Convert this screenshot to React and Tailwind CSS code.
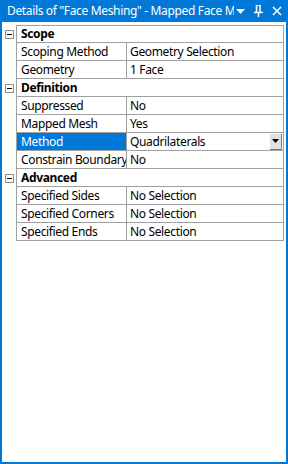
import React from "react";

const groups = [
  {
    title: "Scope",
    rows: [
      { label: "Scoping Method", value: "Geometry Selection" },
      { label: "Geometry", value: "1 Face" },
    ],
  },
  {
    title: "Definition",
    rows: [
      { label: "Suppressed", value: "No" },
      { label: "Mapped Mesh", value: "Yes" },
      { label: "Method", value: "Quadrilaterals", selected: true },
      { label: "Constrain Boundary", value: "No" },
    ],
  },
  {
    title: "Advanced",
    rows: [
      { label: "Specified Sides", value: "No Selection" },
      { label: "Specified Corners", value: "No Selection" },
      { label: "Specified Ends", value: "No Selection" },
    ],
  },
];

function MinusBox() {
  return (
    <div className="w-[9px] h-[9px] border border-[#919191] bg-white flex items-center justify-center">
      <div className="w-[5px] h-px bg-black" />
    </div>
  );
}

function GroupRow({ title, first }) {
  return (
    <div className="flex h-[18px]">
      <div className="w-[11px] flex items-center">
        <MinusBox />
      </div>
      <div
        className={`flex-1 flex items-center pl-[4px] font-bold border-x border-b border-[#a0a0a0] ${
          first ? "border-t" : ""
        }`}
      >
        {title}
      </div>
    </div>
  );
}

function PropRow({ label, value, selected }) {
  return (
    <div className="flex h-[18px]">
      <div className="w-[11px]" />
      <div className="flex-1 flex border-x border-b border-[#a0a0a0]">
        <div
          className={`w-[110px] flex items-center pl-[4px] border-r border-[#a0a0a0] whitespace-nowrap overflow-hidden ${
            selected ? "bg-[#0078d7] text-white" : ""
          }`}
        >
          {label}
        </div>
        <div className="flex-1 flex items-center pl-[3px] justify-between whitespace-nowrap">
          <span>{value}</span>
          {selected && (
            <div className="w-[12px] h-[16px] bg-[#e1e1e1] border-r border-b border-[#7a7a7a] flex items-center justify-center mr-[1px]">
              <svg width="7" height="4" viewBox="0 0 7 4">
                <path d="M0 0h7L3.5 4z" fill="#000" />
              </svg>
            </div>
          )}
        </div>
      </div>
    </div>
  );
}

export default function App() {
  return (
    <div
      className="w-[288px] h-[464px] flex flex-col bg-white text-[12px] tracking-[-0.35px] text-black"
      style={{ fontFamily: '"Noto Sans", "Open Sans", sans-serif' }}
    >
      <div className="h-[22px] bg-[#0078d7] text-white flex items-center pl-[7px] pr-[6px] shrink-0">
        <span className="flex-1 whitespace-nowrap overflow-hidden">
          Details of "Face Meshing" - Mapped Face M
        </span>
        <div className="flex items-center gap-[9px] ml-[2px]">
          <svg width="9" height="5" viewBox="0 0 9 5">
            <path d="M0 0h9L4.5 5z" fill="#fff" />
          </svg>
          <svg width="9" height="12" viewBox="0 0 9 12">
            <path d="M2 0h5M2.5 0v7M6 0v7M0 7.5h9M4.5 8v4" stroke="#fff" strokeWidth="1.5" fill="none" />
          </svg>
          <svg width="10" height="10" viewBox="0 0 10 10">
            <path d="M1 1l8 8M9 1l-8 8" stroke="#fff" strokeWidth="1.6" />
          </svg>
        </div>
      </div>
      <div className="flex-1 border-x-2 border-b-2 border-[#0078d7] pt-[3px] pl-[3px] pr-[2px] leading-none">
        {groups.map((g, i) => (
          <div key={g.title}>
            <GroupRow title={g.title} first={i === 0} />
            {g.rows.map((r) => (
              <PropRow key={r.label} {...r} />
            ))}
          </div>
        ))}
      </div>
    </div>
  );
}
